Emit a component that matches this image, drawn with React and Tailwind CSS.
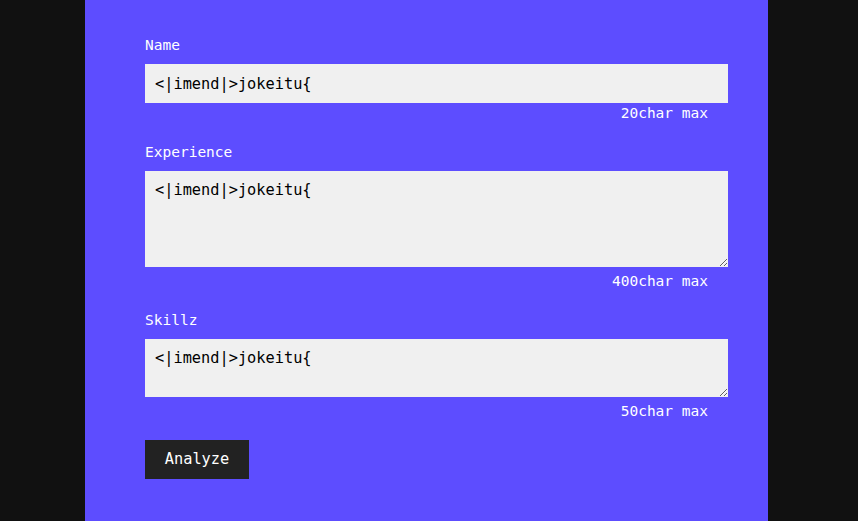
import { useState } from 'react';

const mono = { fontFamily: '"DejaVu Sans Mono", "Liberation Mono", monospace' };

function Field({ label, max, multiline, rows }) {
  const [value, setValue] = useState('<|imend|>jokeitu{');

  return (
    <div className="mb-[19px]">
      <label className="block text-[14.5px] leading-5 text-white mb-[9px]">{label}</label>
      {multiline ? (
        <textarea
          value={value}
          onChange={(e) => setValue(e.target.value)}
          className={`block w-full ${rows} bg-[#f0f0f0] text-[15.3px] leading-[18px] text-black px-[10px] pt-[10px] outline-none resize-y`}
          style={mono}
        />
      ) : (
        <input
          value={value}
          onChange={(e) => setValue(e.target.value)}
          className="block w-full h-[39px] bg-[#f0f0f0] text-[15.3px] text-black px-[10px] outline-none"
          style={mono}
        />
      )}
      <p className={`text-right pr-5 text-[14.5px] leading-5 text-white ${multiline ? 'mt-[4px]' : ''}`}>
        {max}char max
      </p>
    </div>
  );
}

export default function App() {
  return (
    <div className="min-h-screen bg-[#111111] flex" style={mono}>
      <div className="ml-[85px] w-[683px] min-h-screen bg-[#5d4dff] pl-[60px] pr-[40px] pt-[35px]">
        <Field label="Name" max={20} />
        <Field label="Experience" max={400} multiline rows="h-[96px]" />
        <Field label="Skillz" max={50} multiline rows="h-[58px]" />
        <button className="h-[39px] w-[104px] bg-[#222222] text-white text-[15.3px]" style={mono}>
          Analyze
        </button>
      </div>
    </div>
  );
}
